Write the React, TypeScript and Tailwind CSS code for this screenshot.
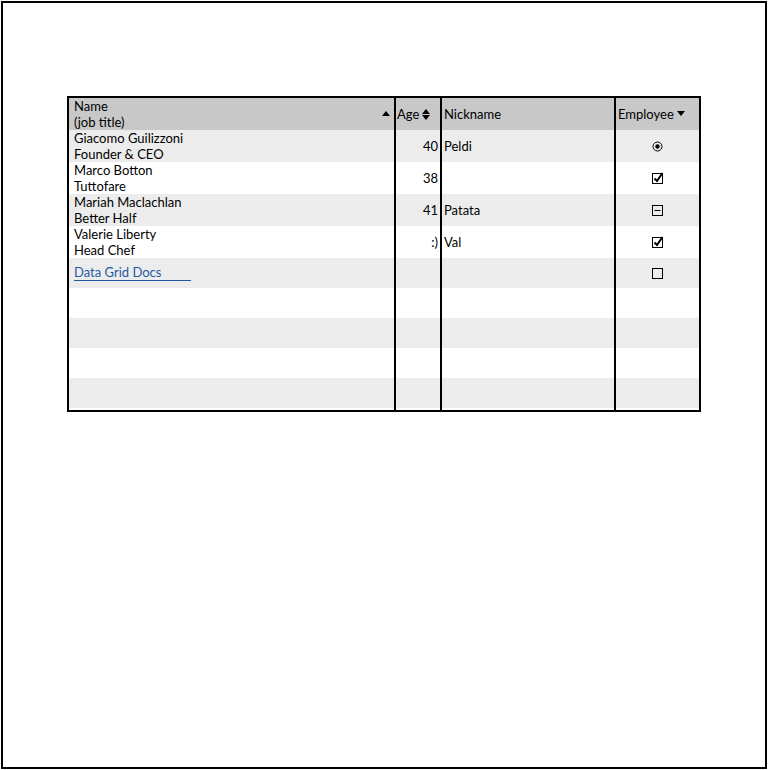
const FONT = "font-['Lato','Liberation_Sans',sans-serif]";

type Check = "radio" | "checked" | "mixed" | "empty" | null;

const ROWS: { name: string; title: string; age: string; nick: string; emp: Check }[] = [
  { name: "Giacomo Guilizzoni", title: "Founder & CEO", age: "40", nick: "Peldi", emp: "radio" },
  { name: "Marco Botton", title: "Tuttofare", age: "38", nick: "", emp: "checked" },
  { name: "Mariah Maclachlan", title: "Better Half", age: "41", nick: "Patata", emp: "mixed" },
  { name: "Valerie Liberty", title: "Head Chef", age: ":)", nick: "Val", emp: "checked" },
];

function Mark({ kind }: { kind: Check }) {
  if (kind === "radio")
    return (
      <svg width="11" height="11" viewBox="0 0 11 11">
        <circle cx="5.5" cy="5.5" r="4.5" fill="none" stroke="#000" strokeWidth="1" />
        <circle cx="5.5" cy="5.5" r="2.2" fill="#000" />
      </svg>
    );
  if (kind === "checked")
    return (
      <svg width="12" height="12" viewBox="0 0 12 12">
        <rect x="0.5" y="1.5" width="10" height="10" fill="none" stroke="#000" strokeWidth="1" />
        <path d="M2.5 6.5 L5 9 L10.5 1" fill="none" stroke="#000" strokeWidth="2" />
      </svg>
    );
  if (kind === "mixed")
    return (
      <svg width="11" height="11" viewBox="0 0 11 11">
        <rect x="0.5" y="0.5" width="10" height="10" fill="none" stroke="#000" strokeWidth="1" />
        <path d="M2.5 5.5 H8.5" stroke="#000" strokeWidth="1" />
      </svg>
    );
  if (kind === "empty")
    return (
      <svg width="11" height="11" viewBox="0 0 11 11">
        <rect x="0.5" y="0.5" width="10" height="10" fill="none" stroke="#000" strokeWidth="1" />
      </svg>
    );
  return null;
}

function Cells({ children, bg, h }: { children: React.ReactNode; bg: string; h: string }) {
  return (
    <div className={`grid grid-cols-[327px_46px_174px_83px] ${bg} ${h}`}>{children}</div>
  );
}

export default function App() {
  return (
    <div className={`w-[768px] h-[770px] bg-white ${FONT} text-[13px] leading-4 text-black`}>
      <div className="ml-[1px] mt-[1px] w-[766px] h-[768px] border-2 border-black pt-[93px] pl-[64px]">
        <div className="w-[634px] h-[316px] border-2 border-black flex flex-col">
          {/* header */}
          <Cells bg="bg-[#c8c8c8]" h="h-8">
            <div className="border-r-2 border-black pl-[5px] flex items-center">
              <div className="flex-1">
                <div>Name</div>
                <div>(job title)</div>
              </div>
              <span className="mr-[4px] mt-[-1px] w-0 h-0 border-l-[4px] border-r-[4px] border-b-[5px] border-l-transparent border-r-transparent border-b-black" />
            </div>
            <div className="border-r-2 border-black pl-[1px] flex items-center">
              <span>Age</span>
              <span className="ml-[3px] flex flex-col gap-[1px]">
                <span className="w-0 h-0 border-l-[4px] border-r-[4px] border-b-[5px] border-l-transparent border-r-transparent border-b-black" />
                <span className="w-0 h-0 border-l-[4px] border-r-[4px] border-t-[5px] border-l-transparent border-r-transparent border-t-black" />
              </span>
            </div>
            <div className="border-r-2 border-black pl-[2px] flex items-center">Nickname</div>
            <div className="pl-[2px] flex items-center">
              <span>Employee</span>
              <span className="ml-[3px] mt-[-2px] w-0 h-0 border-l-[4px] border-r-[4px] border-t-[5px] border-l-transparent border-r-transparent border-t-black" />
            </div>
          </Cells>

          {ROWS.map((r, i) => (
            <Cells key={r.name} bg={i % 2 === 0 ? "bg-[#ececec]" : "bg-white"} h="h-8">
              <div className="border-r-2 border-black pl-[5px] flex flex-col justify-center">
                <div>{r.name}</div>
                <div>{r.title}</div>
              </div>
              <div className="border-r-2 border-black pr-[2px] flex items-center justify-end">{r.age}</div>
              <div className="border-r-2 border-black pl-[2px] flex items-center">{r.nick}</div>
              <div className="flex items-center justify-center">
                <Mark kind={r.emp} />
              </div>
            </Cells>
          ))}

          <Cells bg="bg-[#ececec]" h="h-[30px]">
            <div className="border-r-2 border-black pl-[5px] flex items-center">
              <span className="text-[#1f5aa0] border-b border-[#1f5aa0] pr-[30px] leading-[15px]">Data Grid Docs</span>
            </div>
            <div className="border-r-2 border-black" />
            <div className="border-r-2 border-black" />
            <div className="flex items-center justify-center">
              <Mark kind="empty" />
            </div>
          </Cells>

          {[0, 1, 2, 3].map((i) => (
            <Cells key={i} bg={i % 2 === 0 ? "bg-white" : "bg-[#ececec]"} h="h-[30px]">
              <div className="border-r-2 border-black" />
              <div className="border-r-2 border-black" />
              <div className="border-r-2 border-black" />
              <div />
            </Cells>
          ))}
          <Cells bg="bg-white" h="flex-1">
            <div className="border-r-2 border-black" />
            <div className="border-r-2 border-black" />
            <div className="border-r-2 border-black" />
            <div />
          </Cells>
        </div>
      </div>
    </div>
  );
}
